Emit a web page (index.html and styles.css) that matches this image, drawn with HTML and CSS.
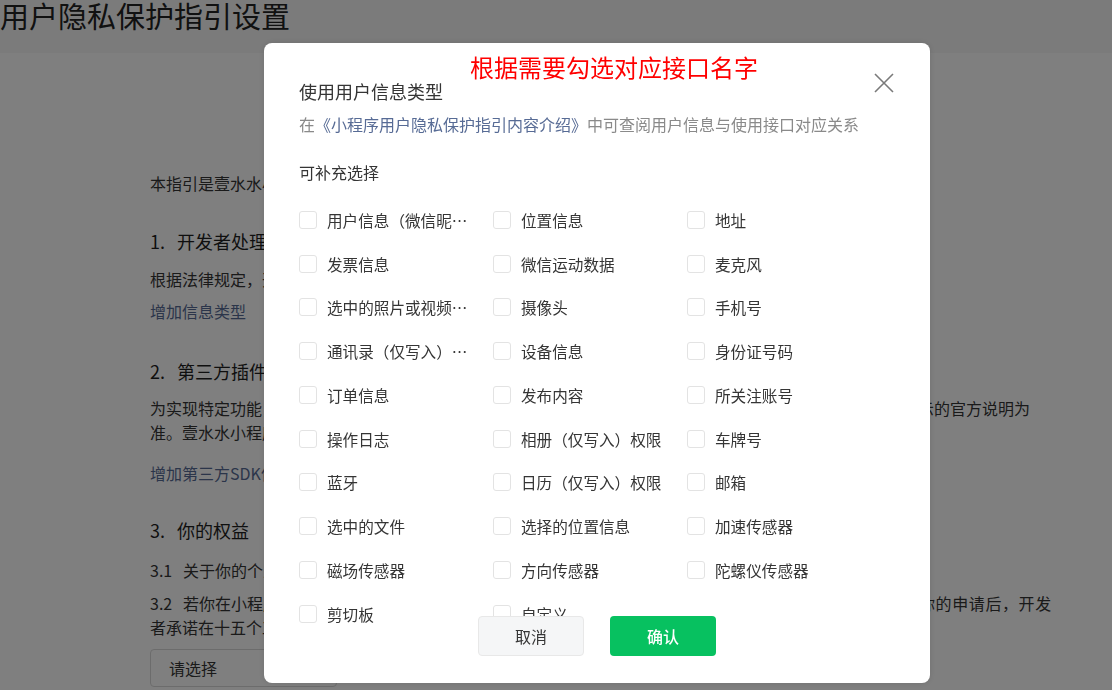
FILE: index.html
```html
<!DOCTYPE html>
<html lang="zh-CN">
<head>
<meta charset="utf-8">
<title>用户隐私保护指引设置</title>
<link rel="stylesheet" href="styles.css">
</head>
<body>
<div class="page">
  <header class="topbar">
    <h1 class="page-title">用户隐私保护指引设置</h1>
  </header>
  <main class="card">
    <p class="para intro">本指引是壹水水小程序开发者（以下简称“开发者”）为处理你的个人信息而制定。</p>
    <h2 class="sec sec-1"><span class="num-h">1.</span>开发者处理的信息</h2>
    <p class="para p-1">根据法律规定，开发者仅处理实现小程序功能所必要的信息。</p>
    <a class="link link-1">增加信息类型</a>
    <h2 class="sec sec-2"><span class="num-h">2.</span>第三方插件信息/SDK信息</h2>
    <p class="para p-2">为实现特定功能，壹水水小程序可能会接入第三方提供的软件开发工具包，第三方收集你的信息，以第三方展示的官方说明为<br>准。壹水水小程序不会主动共享或提供你的信息给第三方插件。</p>
    <a class="link link-2">增加第三方SDK信息</a>
    <h2 class="sec sec-3"><span class="num-h">3.</span>你的权益</h2>
    <p class="para p-31"><span class="num-p">3.1</span>关于你的个人信息，你可以通过以下方式与开发者联系，行使查阅、复制、更正、删除等法定权利。</p>
    <p class="para p-32"><span class="num-p">3.2</span>若你在小程序中注册了账号，可以通过以下方式与开发者联系，行使查阅、复制、更正等权利。在接收到<span class="tail">你的申请后，开发</span><br>者承诺在十五个工作日内完成核查和处理，并按照法律法规要求处理你的请求。</p>
    <div class="select">请选择</div>
  </main>
</div>

<div class="mask"></div>

<div class="dialog">
  <div class="annotation">根据需要勾选对应接口名字</div>
  <svg class="close" width="20" height="20" viewBox="0 0 20 20">
    <path d="M1 1 L19 19 M19 1 L1 19" stroke="#7a7a7a" stroke-width="1.6" fill="none"/>
  </svg>
  <div class="dialog-body">
    <div class="dialog-title">使用用户信息类型</div>
    <div class="dialog-sub">在<a class="sub-link">《小程序用户隐私保护指引内容介绍》</a>中可查阅用户信息与使用接口对应关系</div>
    <div class="group-title">可补充选择</div>
    <div class="options">
      <label class="opt"><span class="cb"></span><span class="opt-label">用户信息（微信昵称、头像）</span></label>
      <label class="opt"><span class="cb"></span><span class="opt-label">位置信息</span></label>
      <label class="opt"><span class="cb"></span><span class="opt-label">地址</span></label>
      <label class="opt"><span class="cb"></span><span class="opt-label">发票信息</span></label>
      <label class="opt"><span class="cb"></span><span class="opt-label">微信运动数据</span></label>
      <label class="opt"><span class="cb"></span><span class="opt-label">麦克风</span></label>
      <label class="opt"><span class="cb"></span><span class="opt-label">选中的照片或视频信息</span></label>
      <label class="opt"><span class="cb"></span><span class="opt-label">摄像头</span></label>
      <label class="opt"><span class="cb"></span><span class="opt-label">手机号</span></label>
      <label class="opt"><span class="cb"></span><span class="opt-label">通讯录（仅写入）权限</span></label>
      <label class="opt"><span class="cb"></span><span class="opt-label">设备信息</span></label>
      <label class="opt"><span class="cb"></span><span class="opt-label">身份证号码</span></label>
      <label class="opt"><span class="cb"></span><span class="opt-label">订单信息</span></label>
      <label class="opt"><span class="cb"></span><span class="opt-label">发布内容</span></label>
      <label class="opt"><span class="cb"></span><span class="opt-label">所关注账号</span></label>
      <label class="opt"><span class="cb"></span><span class="opt-label">操作日志</span></label>
      <label class="opt"><span class="cb"></span><span class="opt-label">相册（仅写入）权限</span></label>
      <label class="opt"><span class="cb"></span><span class="opt-label">车牌号</span></label>
      <label class="opt"><span class="cb"></span><span class="opt-label">蓝牙</span></label>
      <label class="opt"><span class="cb"></span><span class="opt-label">日历（仅写入）权限</span></label>
      <label class="opt"><span class="cb"></span><span class="opt-label">邮箱</span></label>
      <label class="opt"><span class="cb"></span><span class="opt-label">选中的文件</span></label>
      <label class="opt"><span class="cb"></span><span class="opt-label">选择的位置信息</span></label>
      <label class="opt"><span class="cb"></span><span class="opt-label">加速传感器</span></label>
      <label class="opt"><span class="cb"></span><span class="opt-label">磁场传感器</span></label>
      <label class="opt"><span class="cb"></span><span class="opt-label">方向传感器</span></label>
      <label class="opt"><span class="cb"></span><span class="opt-label">陀螺仪传感器</span></label>
      <label class="opt"><span class="cb"></span><span class="opt-label">剪切板</span></label>
      <label class="opt"><span class="cb"></span><span class="opt-label">自定义</span></label>
    </div>
  </div>
  <div class="dialog-footer">
    <div class="btn btn-cancel">取消</div>
    <div class="btn btn-ok">确认</div>
  </div>
</div>
</body>
</html>
```

FILE: styles.css
```css
* {
  box-sizing: border-box;
  -webkit-print-color-adjust: exact;
  print-color-adjust: exact;
}
html, body { margin: 0; padding: 0; }
body {
  width: 1112px;
  height: 690px;
  overflow: hidden;
  background: #fff;
  color: #353535;
  font-family: "Noto Sans CJK SC", "Noto Sans", sans-serif;
}

.topbar {
  height: 53px;
  background: #f6f6f6;
}
.page-title {
  margin: 0;
  font-size: 29px;
  line-height: 30px;
  font-weight: 400;
  color: #222;
}

.card {
  background: #fff;
  padding: 118px 0 0 150px;
  height: 637px;
}
.para {
  margin: 0;
  font-size: 16px;
  line-height: 24px;
  white-space: nowrap;
  color: #353535;
}
.sec {
  margin: 0;
  font-size: 18px;
  line-height: 26px;
  font-weight: 400;
  color: #1f1f1f;
  white-space: nowrap;
}
.num-h { display: inline-block; width: 27px; }
.num-p { display: inline-block; width: 33px; }
.tail { letter-spacing: 0.6px; }
.link {
  display: block;
  font-size: 16px;
  line-height: 24px;
  color: #576b95;
}
.sec-1 { margin-top: 33px; }
.p-1 { margin-top: 13px; }
.link-1 { margin-top: 8px; }
.sec-2 { margin-top: 35px; }
.p-2 { margin-top: 12px; }
.link-2 { margin-top: 17px; }
.sec-3 { margin-top: 32px; }
.p-31 { margin-top: 15px; }
.p-32 { margin-top: 9px; }
.select {
  margin-top: 10px;
  width: 187px;
  height: 38px;
  border: 1px solid #d9d9d9;
  border-radius: 4px;
  padding-left: 18px;
  font-size: 16px;
  line-height: 36px;
  color: #353535;
}

.mask {
  position: fixed;
  top: 0;
  left: 0;
  right: 0;
  bottom: 0;
  background-color: rgba(0, 0, 0, 0.5);
  z-index: 10;
}

.dialog {
  position: fixed;
  left: 264px;
  top: 43px;
  width: 666px;
  height: 640px;
  background: #fff;
  border-radius: 8px;
  overflow: hidden;
  z-index: 20;
  box-shadow: 0 0 6px rgba(0, 0, 0, 0.12);
}
.annotation {
  position: absolute;
  left: 206px;
  top: 8px;
  font-size: 24px;
  line-height: 32px;
  color: #ff0000;
  white-space: nowrap;
}
.close {
  position: absolute;
  right: 36px;
  top: 30px;
}
.dialog-body {
  height: 100%;
  overflow: hidden;
  padding: 35px 35px 0;
}
.dialog-title {
  font-size: 18px;
  line-height: 26px;
  color: #353535;
}
.dialog-sub {
  margin-top: 8px;
  font-size: 16px;
  line-height: 24px;
  color: #8a8a8a;
  white-space: nowrap;
}
.sub-link { color: #576b95; }
.group-title {
  margin-top: 24px;
  font-size: 16px;
  line-height: 24px;
  color: #353535;
}
.options {
  margin-top: 14px;
  display: grid;
  grid-template-columns: repeat(3, 194px);
  grid-auto-rows: 43.75px;
}
.opt {
  display: flex;
  align-items: center;
}
.cb {
  flex-shrink: 0;
  width: 18px;
  height: 18px;
  border: 1px solid #e3e3e3;
  border-radius: 3px;
  background: #fff;
}
.opt-label {
  margin-left: 10px;
  max-width: 142px;
  font-size: 15.6px;
  line-height: 22px;
  color: #353535;
  white-space: nowrap;
  overflow: hidden;
  text-overflow: ellipsis;
}

.dialog-footer {
  position: absolute;
  left: 0;
  right: 0;
  bottom: 27px;
  display: flex;
  justify-content: center;
  gap: 26px;
}
.btn {
  width: 106px;
  height: 40px;
  border-radius: 4px;
  display: flex;
  align-items: center;
  justify-content: center;
  font-size: 16px;
}
.btn-cancel {
  background: #f5f6f7;
  border: 1px solid #e8e8e8;
  color: #353535;
}
.btn-ok {
  background: #07c160;
  color: #fff;
  font-weight: 500;
}
```
